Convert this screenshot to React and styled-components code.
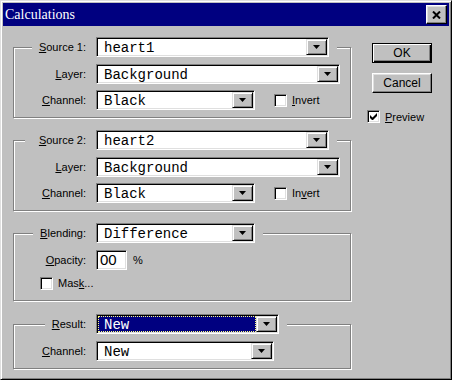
import React from "react";
import styled, { createGlobalStyle } from "styled-components";

const GlobalStyle = createGlobalStyle`
  html, body {
    margin: 0;
    padding: 0;
    background: #c0c0c0;
  }
  body {
    font-family: "Liberation Sans", Arial, sans-serif;
    font-size: 11px;
    color: #000;
  }
`;

const Window = styled.div`
  box-sizing: border-box;
  width: 452px;
  height: 380px;
  padding: 2px;
  background: #c0c0c0;
  border: 1px solid;
  border-color: #dfdfdf #000 #000 #dfdfdf;
  box-shadow: inset 1px 1px #fff, inset -1px -1px #808080;
  display: flex;
  flex-direction: column;
`;

const TitleBar = styled.div`
  height: 23px;
  background: #000080;
  display: flex;
  align-items: center;
  justify-content: space-between;
  padding: 0 2px 0 2px;
`;

const Title = styled.span`
  font-family: "Liberation Serif", "Times New Roman", serif;
  font-size: 14px;
  color: #fff;
`;

const CloseButton = styled.div`
  box-sizing: border-box;
  width: 21px;
  height: 19px;
  background: #c0c0c0;
  border: 1px solid;
  border-color: #fff #000 #000 #fff;
  box-shadow: inset -1px -1px #808080, inset 1px 1px #dfdfdf;
  display: flex;
  align-items: center;
  justify-content: center;
`;

const Body = styled.div`
  display: flex;
  padding: 11px 0 0 10px;
`;

const LeftColumn = styled.div`
  width: 338px;
  display: flex;
  flex-direction: column;
`;

const Group = styled.fieldset`
  margin: ${(p) => p.$top || 0}px 0 0 0;
  padding: 0;
  min-width: 0;
  border: 1px solid #808080;
  box-shadow: inset 1px 1px #fff, 1px 1px #fff;
`;

const Legend = styled.legend`
  margin-left: ${(p) => p.$start - 14}px;
  padding: 0 8px 0 0;
  background: #c0c0c0;
  display: flex;
  align-items: center;
`;

const GroupBody = styled.div`
  display: flex;
  flex-direction: column;
  gap: 6px;
  padding: 7px 0 ${(p) => p.$bottom || 7}px 0;
`;

const Row = styled.div`
  display: flex;
  align-items: center;
  height: ${(p) => p.$h || 20}px;
  padding-left: ${(p) => p.$indent || 0}px;
`;

const Label = styled.span`
  width: ${(p) => p.$w || 72}px;
  text-align: right;
  margin-right: 10px;
  white-space: nowrap;
`;

const Combo = styled.div`
  box-sizing: border-box;
  width: ${(p) => p.$w}px;
  height: 20px;
  padding: 1px;
  display: flex;
  background: #fff;
  border: 1px solid;
  border-color: #808080 #fff #fff #808080;
  box-shadow: inset 1px 1px #000, inset -1px -1px #dfdfdf;
`;

const ComboText = styled.div`
  flex: 1;
  box-sizing: border-box;
  white-space: pre;
  font-family: "Liberation Mono", "Courier New", monospace;
  font-size: 14px;
  line-height: 14px;
  padding: 1px 0 0 5px;
  color: ${(p) => (p.$selected ? "#fff" : "#000")};
  background: ${(p) => (p.$selected ? "#000080" : "transparent")};
  border: 1px dotted ${(p) => (p.$selected ? "#ffff80" : "transparent")};
`;

const ComboButton = styled.div`
  box-sizing: border-box;
  width: 21px;
  background: #c0c0c0;
  border: 1px solid;
  border-color: #dfdfdf #000 #000 #dfdfdf;
  box-shadow: inset 1px 1px #fff, inset -1px -1px #808080;
  display: flex;
  align-items: center;
  justify-content: center;
`;

const Check = styled.span`
  box-sizing: border-box;
  width: 13px;
  height: 13px;
  flex: none;
  background: #fff;
  border: 1px solid;
  border-color: #808080 #fff #fff #808080;
  box-shadow: inset 1px 1px #000, inset -1px -1px #dfdfdf;
  display: flex;
  align-items: center;
  justify-content: center;
`;

const CheckLabel = styled.label`
  display: flex;
  align-items: center;
  gap: 5px;
  margin-left: ${(p) => p.$ml || 0}px;
  white-space: nowrap;
`;

const NumberField = styled.div`
  box-sizing: border-box;
  width: 31px;
  height: 20px;
  background: #fff;
  border: 1px solid;
  border-color: #808080 #fff #fff #808080;
  box-shadow: inset 1px 1px #000, inset -1px -1px #dfdfdf;
  font-size: 15px;
  line-height: 18px;
  padding-left: 3px;
`;

const Unit = styled.span`
  margin-left: 6px;
`;

const RightColumn = styled.div`
  display: flex;
  flex-direction: column;
  margin-left: 16px;
  padding-top: 6px;
`;

const PushButton = styled.div`
  box-sizing: border-box;
  width: 60px;
  height: 20px;
  margin: 0 0 ${(p) => p.$mb || 0}px 5px;
  background: #c0c0c0;
  font-size: 12px;
  display: flex;
  align-items: center;
  justify-content: center;
  border: 1px solid;
  border-color: ${(p) => (p.$default ? "#000" : "#fff #000 #000 #fff")};
  box-shadow: ${(p) =>
    p.$default
      ? "inset 1px 1px #fff, inset -1px -1px #000, inset -2px -2px #808080"
      : "inset -1px -1px #808080, inset 1px 1px #dfdfdf"};
`;

const Arrow = () => (
  <svg width="7" height="4" viewBox="0 0 7 4">
    <path d="M0 0h7L3.5 4z" fill="#000" />
  </svg>
);

const Dropdown = ({ width, value, selected }) => (
  <Combo $w={width}>
    <ComboText $selected={selected}>{value}</ComboText>
    <ComboButton>
      <Arrow />
    </ComboButton>
  </Combo>
);

const CheckBox = ({ checked, children, ml }) => (
  <CheckLabel $ml={ml}>
    <Check>
      {checked && (
        <svg width="7" height="7" viewBox="0 0 7 7">
          <path d="M0 2v3l2 2h1l4-4V0L2.5 4.5z" fill="#000" />
        </svg>
      )}
    </Check>
    <span>{children}</span>
  </CheckLabel>
);

const SourceGroup = ({ top, start, num, image, access }) => (
  <Group $top={top}>
    <Legend $start={start}>
      <Label $w={86 - start}>
        <u>S</u>ource {num}:
      </Label>
      <Dropdown width={233} value={image} />
    </Legend>
    <GroupBody>
      <Row>
        <Label>
          <u>L</u>ayer:
        </Label>
        <Dropdown width={244} value="Background" />
      </Row>
      <Row>
        <Label>
          <u>C</u>hannel:
        </Label>
        <Dropdown width={159} value="Black" />
        <CheckBox ml={19}>{access}</CheckBox>
      </Row>
    </GroupBody>
  </Group>
);

export default function App() {
  return (
    <>
      <GlobalStyle />
      <Window>
        <TitleBar>
          <Title>Calculations</Title>
          <CloseButton>
            <svg width="9" height="8" viewBox="0 0 9 8">
              <path d="M1 0.5l7 7M8 0.5l-7 7" stroke="#000" strokeWidth="2" />
            </svg>
          </CloseButton>
        </TitleBar>
        <Body>
          <LeftColumn>
            <SourceGroup
              start={32}
              num={1}
              image="heart1"
              access={
                <>
                  <u>I</u>nvert
                </>
              }
            />
            <SourceGroup
              top={12}
              start={25}
              num={2}
              image="heart2"
              access={
                <>
                  In<u>v</u>ert
                </>
              }
            />
            <Group $top={12}>
              <Legend $start={33}>
                <Label $w={53}>
                  <u>B</u>lending:
                </Label>
                <Dropdown width={159} value="Difference" />
              </Legend>
              <GroupBody $bottom={10}>
                <Row>
                  <Label>
                    <u>O</u>pacity:
                  </Label>
                  <NumberField>00</NumberField>
                  <Unit>%</Unit>
                </Row>
                <Row $h={14} $indent={26}>
                  <CheckBox>
                    Mas<u>k</u>...
                  </CheckBox>
                </Row>
              </GroupBody>
            </Group>
            <Group $top={13}>
              <Legend $start={45}>
                <Label $w={41}>
                  <u>R</u>esult:
                </Label>
                <Dropdown width={183} value="New" selected />
              </Legend>
              <GroupBody>
                <Row>
                  <Label>
                    <u>C</u>hannel:
                  </Label>
                  <Dropdown width={178} value="New" />
                </Row>
              </GroupBody>
            </Group>
          </LeftColumn>
          <RightColumn>
            <PushButton $default $mb={10}>
              OK
            </PushButton>
            <PushButton $mb={17}>Cancel</PushButton>
            <CheckBox checked>
              <u>P</u>review
            </CheckBox>
          </RightColumn>
        </Body>
      </Window>
    </>
  );
}
